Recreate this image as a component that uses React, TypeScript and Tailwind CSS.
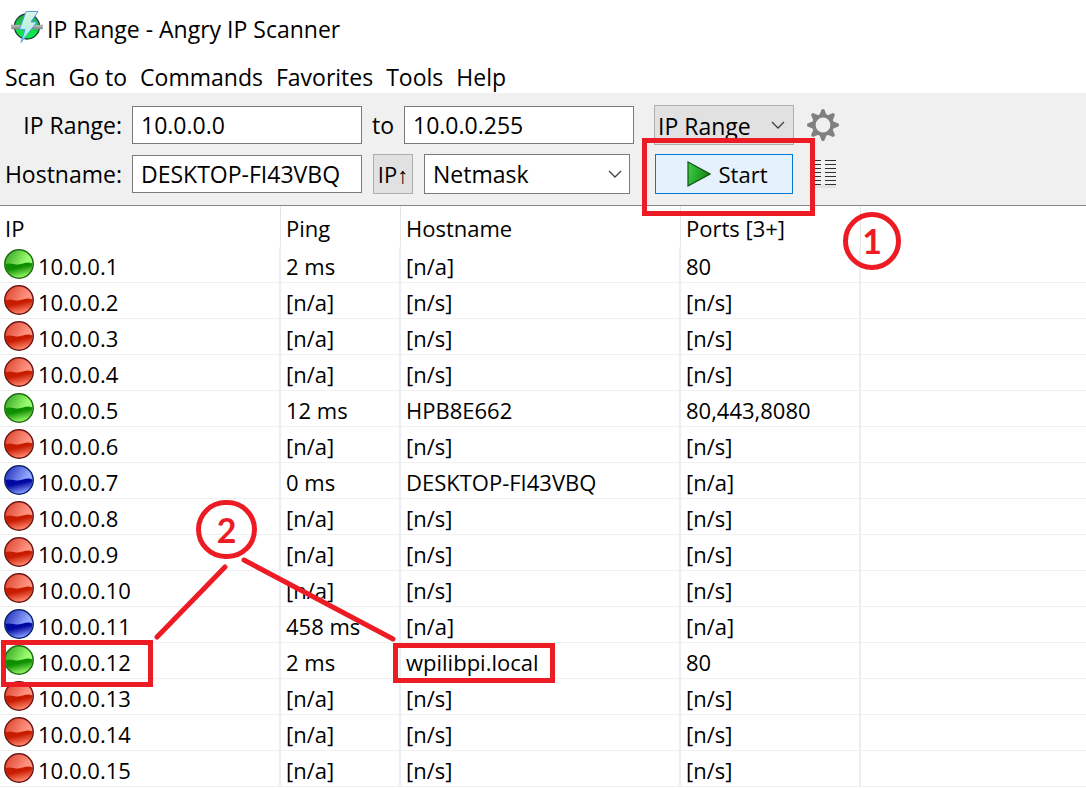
import React from 'react';

type Status = 'alive' | 'dead' | 'partial';

interface Host {
  ip: string;
  status: Status;
  ping: string;
  hostname: string;
  ports: string;
}

const dead = (ip: string): Host => ({ ip, status: 'dead', ping: '[n/a]', hostname: '[n/s]', ports: '[n/s]' });

const hosts: Host[] = [
  { ip: '10.0.0.1', status: 'alive', ping: '2 ms', hostname: '[n/a]', ports: '80' },
  dead('10.0.0.2'),
  dead('10.0.0.3'),
  dead('10.0.0.4'),
  { ip: '10.0.0.5', status: 'alive', ping: '12 ms', hostname: 'HPB8E662', ports: '80,443,8080' },
  dead('10.0.0.6'),
  { ip: '10.0.0.7', status: 'partial', ping: '0 ms', hostname: 'DESKTOP-FI43VBQ', ports: '[n/a]' },
  dead('10.0.0.8'),
  dead('10.0.0.9'),
  dead('10.0.0.10'),
  { ip: '10.0.0.11', status: 'partial', ping: '458 ms', hostname: '[n/a]', ports: '[n/a]' },
  { ip: '10.0.0.12', status: 'alive', ping: '2 ms', hostname: 'wpilibpi.local', ports: '80' },
  dead('10.0.0.13'),
  dead('10.0.0.14'),
  dead('10.0.0.15'),
];

const balls: Record<Status, { rim: string; top: string; light: string; deep: string; pale: string }> = {
  alive: { rim: '#1f6b12', top: '#3fae28', light: '#9dff70', deep: '#0f8f00', pale: '#8cf060' },
  dead: { rim: '#6e1410', top: '#e04c38', light: '#ff9480', deep: '#c81c00', pale: '#ff8068' },
  partial: { rim: '#0c2470', top: '#2c3cc0', light: '#92a6ff', deep: '#0008a0', pale: '#7c94f8' },
};

function StatusBall({ status }: { status: Status }) {
  const c = balls[status];
  return (
    <svg className="size-[30px] shrink-0" viewBox="0 0 30 30" role="img" aria-label={status}>
      <defs>
        <linearGradient id={`${status}-top`} x1="0" y1="0.1" x2="0.9" y2="0.6">
          <stop offset="0.1" stopColor={c.top} />
          <stop offset="0.8" stopColor={c.light} />
        </linearGradient>
        <linearGradient id={`${status}-deep`} x1="0.35" y1="0.2" x2="0.7" y2="1">
          <stop offset="0.2" stopColor={c.deep} />
          <stop offset="0.9" stopColor={c.pale} />
        </linearGradient>
      </defs>
      <circle cx="15" cy="15" r="14" fill={`url(#${status}-top)`} />
      <path d="M1.5 15C6 13.500 10 15.500 14 15.500C19 15.500 22 12 28.500 14.500A13.500 13.500 0 0 1 1.500 15Z" fill={`url(#${status}-deep)`} />
      <circle cx="15" cy="15" r="14.200" fill="none" stroke={c.rim} strokeWidth="1.500" />
    </svg>
  );
}

function AppLogo() {
  return (
    <svg className="size-8 shrink-0" viewBox="0 0 32 32" aria-hidden="true">
      <defs>
        <linearGradient id="globe" x1="0" y1="0" x2="0" y2="1">
          <stop offset="0" stopColor="#1fa848" />
          <stop offset="1" stopColor="#08f848" />
        </linearGradient>
        <linearGradient id="band" x1="0" y1="0" x2="0" y2="1">
          <stop offset="0" stopColor="#c8c8c8" />
          <stop offset="1" stopColor="#808080" />
        </linearGradient>
        <linearGradient id="bolt" x1="0" y1="0" x2="0" y2="1">
          <stop offset="0" stopColor="#d8f8e0" />
          <stop offset="1" stopColor="#a0e8e8" />
        </linearGradient>
      </defs>
      <circle cx="16" cy="15.500" r="12.500" fill="url(#globe)" stroke="#1c3c34" strokeWidth="1.300" />
      <rect x="0.500" y="14" width="31" height="4" fill="url(#band)" stroke="#909090" strokeWidth="0.500" />
      <path d="M15 0.500H27L20 11H26L10 31.500L14 18.500H8.500Z" fill="url(#bolt)" stroke="#4c94e8" strokeWidth="0.900" strokeLinejoin="round" />
    </svg>
  );
}

function Gear() {
  return (
    <svg className="size-8" viewBox="0 0 32 32" aria-hidden="true">
      <g fill="#808080">
        {[0, 45, 90, 135, 180, 225, 270, 315].map((a) => (
          <path key={a} d="M12 7L14.600 0.500Q16 -0.500 17.400 0.500L20 7Z" transform={`rotate(${a} 16 16)`} />
        ))}
      </g>
      <circle cx="16" cy="16" r="9.200" fill="#f0f0f0" stroke="#808080" strokeWidth="3.600" />
    </svg>
  );
}

function ColumnsIcon() {
  return (
    <svg className="h-[30px] w-8" viewBox="0 0 32 30" aria-hidden="true">
      <rect x="3" y="26" width="26" height="3" fill="#e2e2e2" />
      {[1, 5, 9, 13, 17, 21, 25].map((y) => (
        <path key={y} d={`M4 ${y + 0.5}H14M18 ${y + 0.5}H29`} stroke="#303030" strokeWidth="1" />
      ))}
    </svg>
  );
}

function Chevron() {
  return (
    <svg className="h-2 w-[14px] shrink-0" viewBox="0 0 14 8" aria-hidden="true">
      <path d="M1 1L7 7L13 1" fill="none" stroke="#404040" strokeWidth="1.300" />
    </svg>
  );
}

const field = 'h-[38px] w-[230px] border border-[#7a7a7a] bg-white px-2 outline-none';
const cell = 'border-r-2 border-b border-r-[#ebeef5] border-b-[#f0f0f0] p-0 pt-1 pl-[5px] leading-[31px] font-normal';
const head = 'border-r border-[#e5e5e5] p-0 pt-0.5 pl-[5px] text-left font-normal';

export default function App() {
  return (
    <div className="relative min-h-screen overflow-hidden bg-white font-['Open_Sans','Noto_Sans',sans-serif] text-[23px] leading-[30px] text-black">
      <header className="flex h-[60px] items-center pb-1.5 pl-[11px]">
        <AppLogo />
        <h1 className="pt-1 pl-1">IP Range - Angry IP Scanner</h1>
      </header>
      <nav className="flex h-[33px] items-center gap-[13px] pl-[5px]">
        {['Scan', 'Go to', 'Commands', 'Favorites', 'Tools', 'Help'].map((m) => (
          <button key={m} type="button">{m}</button>
        ))}
      </nav>

      <form className="flex h-[113px] flex-col gap-[9px] border-b border-[#828790] bg-[#f0f0f0] pt-3" onSubmit={(e) => e.preventDefault()}>
        <div className="flex h-10 items-center">
          <label htmlFor="from" className="w-[122px] text-right">IP Range:</label>
          <input id="from" className={`${field} ml-2.5`} defaultValue="10.0.0.0" />
          <label htmlFor="to" className="w-[42px] text-center">to</label>
          <input id="to" className={field} defaultValue="10.0.0.255" />
          <button type="button" className="ml-5 flex h-10 w-[140px] items-center justify-between border border-[#adadad] bg-[#e1e1e1] pr-2 pl-[3px]">
            <span className="pt-0.5">IP Range</span>
            <Chevron />
          </button>
          <button type="button" aria-label="Preferences" className="ml-[13px]"><Gear /></button>
        </div>
        <div className="flex h-10 items-center">
          <label htmlFor="host" className="w-[122px] text-right">Hostname:</label>
          <input id="host" className={`${field} ml-2.5`} defaultValue="DESKTOP-FI43VBQ" />
          <button type="button" className="ml-[11px] h-10 w-10 border border-[#adadad] bg-[#e1e1e1] text-[22px]">IP↑</button>
          <div className="ml-[11px] grid h-10 w-[206px] items-center">
            <select aria-label="Netmask" className="col-start-1 row-start-1 h-10 w-full appearance-none border border-[#7a7a7a] bg-white px-2 outline-none">
              <option>Netmask</option>
            </select>
            <span className="pointer-events-none col-start-1 row-start-1 mr-2 flex justify-end"><Chevron /></span>
          </div>
          <button type="submit" className="ml-[25px] flex h-10 w-[138px] items-center justify-center gap-2 border border-[#0078d7] bg-[#e5f1fb] pl-1.5 text-[22px]">
            <svg className="h-[26px] w-6" viewBox="0 0 24 26" aria-hidden="true">
              <defs>
                <linearGradient id="play" x1="0" y1="0" x2="1" y2="0.3">
                  <stop offset="0" stopColor="#3fd048" />
                  <stop offset="1" stopColor="#128a14" />
                </linearGradient>
              </defs>
              <path d="M1 1L23 13L1 25Z" fill="url(#play)" stroke="#14501a" strokeWidth="1.200" />
            </svg>
            Start
          </button>
          <button type="button" aria-label="Select fetchers" className="ml-[14px]"><ColumnsIcon /></button>
        </div>
      </form>

      <table className="w-full table-fixed border-separate border-spacing-0 text-[22px]">
        <colgroup>
          <col className="w-[281px]" />
          <col className="w-[120px]" />
          <col className="w-[280px]" />
          <col className="w-[180px]" />
          <col />
        </colgroup>
        <thead>
          <tr className="h-[41px]">
            <th className={head}>IP</th>
            <th className={head}>Ping</th>
            <th className={head}>Hostname</th>
            <th className={head}>Ports [3+]</th>
            <td />
          </tr>
        </thead>
        <tbody>
          {hosts.map((h) => (
            <tr key={h.ip} className="h-9">
              <td className="border-r-2 border-b border-r-[#ebeef5] border-b-[#f0f0f0] p-0 pl-1">
                <div className="flex h-[35px] items-start gap-1 pt-0.5">
                  <StatusBall status={h.status} />
                  <span className="pt-0.5 leading-[31px]">{h.ip}</span>
                </div>
              </td>
              <td className={cell}>{h.ping}</td>
              <td className={cell}>{h.hostname}</td>
              <td className={cell}>{h.ports}</td>
              <td className="border-b border-[#f0f0f0] p-0" />
            </tr>
          ))}
        </tbody>
      </table>

      <div className="pointer-events-none absolute top-[138px] left-[642px] h-[78px] w-[173px] border-[5px] border-[#ed1c24]" />
      <div className="pointer-events-none absolute top-[640px] left-[1px] h-[47px] w-[152px] border-[5px] border-[#ed1c24]" />
      <div className="pointer-events-none absolute top-[643px] left-[393px] h-10 w-[162px] border-[5px] border-[#ed1c24]" />
      <div className="pointer-events-none absolute top-[212px] left-[843px] flex size-[58px] items-center justify-center rounded-full border-[5px] border-[#ed1c24] font-['Lato',sans-serif] text-[34px] font-bold text-[#ed1c24]">1</div>
      <div className="pointer-events-none absolute top-[500px] left-[196px] flex h-[59px] w-[61px] items-center justify-center rounded-full border-[5px] border-[#ed1c24] font-['Lato',sans-serif] text-[34px] font-bold text-[#ed1c24]">2</div>
      <svg className="pointer-events-none absolute top-[550px] left-[150px] h-[100px] w-[260px]" viewBox="150 550 260 100" aria-hidden="true">
        <path d="M225 567L157 637M244 560L393 639" stroke="#ed1c24" strokeWidth="5" strokeLinecap="round" />
      </svg>
    </div>
  );
}
